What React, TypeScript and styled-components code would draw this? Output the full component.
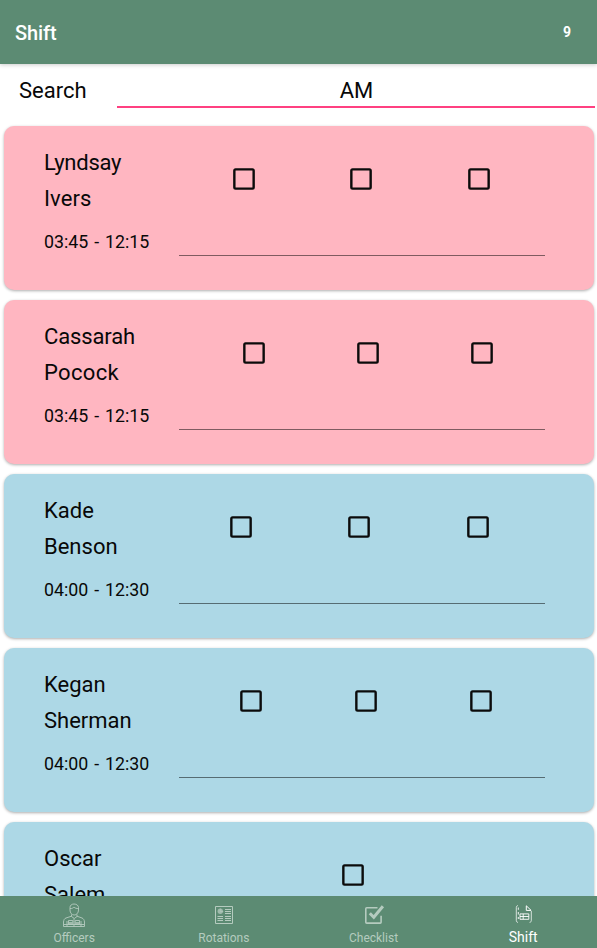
import React from 'react';
import styled, { createGlobalStyle } from 'styled-components';

const GlobalStyle = createGlobalStyle`
  * { box-sizing: border-box; }
  body { margin: 0; background: #fff; overflow: hidden; }
  h1, p { margin: 0; font-weight: 400; }
`;

const Screen = styled.div`
  display: flex;
  flex-direction: column;
  width: 100%;
  height: 948px;
  overflow: hidden;
  background: #fff;
  color: #080808;
  font-family: Roboto, sans-serif;
`;

const Toolbar = styled.header`
  display: flex;
  flex: none;
  align-items: center;
  justify-content: space-between;
  height: 64px;
  padding: 2px 26px 0 15px;
  background: #5c8b73;
  color: #fff;
  box-shadow: 0 1px 4px rgba(0, 0, 0, 0.2);
`;

const Title = styled.h1`
  font-size: 20px;
  font-weight: 500;
  line-height: 24px;
  letter-spacing: -0.1px;
`;

const Count = styled.span`
  font-size: 14px;
  font-weight: 700;
  line-height: 20px;
  padding-bottom: 2px;
`;

const SearchRow = styled.div`
  display: flex;
  flex: none;
  height: 44px;
  padding: 0 2px 0 19px;
`;

const SearchLabel = styled.label`
  width: 98px;
  padding-top: 9px;
  font-size: 22px;
  line-height: 36px;
`;

const SearchInput = styled.input`
  flex: 1;
  min-width: 0;
  padding: 12px 0 0 1px;
  border: 0;
  border-bottom: 2px solid #ff4081;
  outline: 0;
  background: transparent;
  color: inherit;
  font: 22px/30px Roboto, sans-serif;
  text-align: center;
`;

const List = styled.main`
  display: flex;
  flex: 1;
  flex-direction: column;
  gap: 10px;
  min-height: 0;
  padding: 18px 3px 0 4px;
  overflow: hidden;
`;

const Card = styled.article<{ $color: string }>`
  flex: none;
  height: 164px;
  padding: 18px 49px 0 40px;
  border-radius: 10px;
  background: ${(p) => p.$color};
  box-shadow: 0 1px 3px rgba(0, 0, 0, 0.32);
`;

const CardTop = styled.div`
  display: flex;
  height: 74px;
`;

const Name = styled.p<{ $width: number }>`
  flex: none;
  width: ${(p) => p.$width}px;
  padding-top: 1px;
  font-size: 22px;
  line-height: 36px;
`;

const NamePart = styled.span<{ $tracking?: number }>`
  display: block;
  letter-spacing: ${(p) => p.$tracking ?? 0}px;
`;

const Checks = styled.div<{ $width: number }>`
  display: flex;
  flex: none;
  width: ${(p) => p.$width}px;
  height: 70px;
  align-items: center;
`;

const CheckCell = styled.div`
  display: flex;
  flex: 1;
  justify-content: center;
`;

const Check = styled.button`
  width: 22px;
  height: 22px;
  padding: 0;
  border: 0;
  background: transparent;
  color: #0b0b0b;

  svg { display: block; }
`;

const CardBottom = styled.div`
  display: flex;
  height: 38px;
`;

const Time = styled.p`
  width: 135px;
  padding-top: 6px;
  font-size: 17.8px;
  line-height: 36px;
  word-spacing: 1.5px;
`;

const Note = styled.input`
  flex: 1;
  min-width: 0;
  height: 38px;
  padding: 0;
  border: 0;
  border-bottom: 1px solid rgba(0, 0, 0, 0.5);
  outline: 0;
  background: transparent;
`;

const TabBar = styled.nav`
  display: grid;
  flex: none;
  grid-template-columns: repeat(4, 149.7px);
  height: 52px;
  background: #5c8b73;
`;

const Tab = styled.button<{ $active?: boolean }>`
  display: flex;
  flex-direction: column;
  align-items: center;
  padding: 7px 1.4px 0 0;
  border: 0;
  background: transparent;
  color: ${(p) => (p.$active ? '#fff' : '#b5cbbf')};
  font: ${(p) => (p.$active ? '14px' : '12px')}/18px Roboto, sans-serif;

  svg { display: block; width: 24px; height: 24px; margin-bottom: ${(p) => (p.$active ? '1px' : '2px')}; }
`;

const OfficerIcon = () => (
  <svg viewBox="0 0 24 24" fill="none" stroke="currentColor" strokeWidth="0.9">
    <path d="M8 6V4.5C8 2.5 9.5 1 12 1s4.5 1.5 4.5 3.5V7c0 3-2 5-4.3 5S8 10 8 7zM8 5.5c2 .4 3-.6 4-1.5 1 1.3 2.6 1.6 4.5 1.5" />
    <path d="M9.5 11.5v2l2.8 2 2.7-2v-2M9.5 13.2 4 15c-1.7.6-2.3 2-2.5 4v4.5h21V19c-.2-2-1-3.4-2.5-4l-5-1.8" />
    <path d="M6.5 17.5h4.3v4H6.5zM13.2 17.5h4.3v4h-4.3zM12 15.5v8M5 18v5.5M19 18v5.5M2 21.5h20" />
    <path d="M7 20h3.5M13.5 20H17" strokeWidth="1.6" />
  </svg>
);

const RotationIcon = () => (
  <svg viewBox="0 0 24 24" fill="none" stroke="currentColor">
    <path d="M3.5 3.5h17v17h-17z" />
    <path d="M5.5 13.5h5.5M5.5 15.5h5.5M5.5 17.5h5.5M13 6.5h6M13 8.5h6M13 10.5h6M13 13.5h6M13 15.5h6M13 17.5h6" />
    <circle cx="8.3" cy="8.3" r="2.7" fill="currentColor" stroke="none" opacity="0.75" />
    <path d="M8.3 5.5v3h3" strokeWidth="0.6" />
  </svg>
);

const ChecklistIcon = () => (
  <svg viewBox="0 0 24 24" fill="none" stroke="currentColor">
    <path d="M15.5 4.8H4.7q-.9 0-.9.9v13.5q0 .9.9.9h13.5q.9 0 .9-.9v-6.5" strokeWidth="1.6" />
    <path d="m7.8 10.2 4 4.1 9.1-11" strokeWidth="3" />
  </svg>
);

const ShiftIcon = () => (
  <svg viewBox="0 0 24 24" fill="none" stroke="currentColor" strokeWidth="0.75">
    <path d="M7 2.6c-1.2.2-1.7.8-1.7 2v12.8c0 1.2.5 1.8 1.7 2M20.3 8v9.4c0 1.2-.5 1.8-1.7 2" />
    <path d="M15.3 2.8v4.6h4.8z" strokeWidth="1" />
    <path d="M7.3 4.5v2.3M7.3 9v2.5M7.3 14v2" strokeWidth="0.9" />
    <path d="M9 10.9h8.8v5.4H9zM9 13.5h8.8M12.2 10.9v5.4" strokeWidth="0.9" />
  </svg>
);

const EmptyBox = () => (
  <svg width="22" height="22" viewBox="0 0 22 22" fill="none" stroke="currentColor">
    <rect x="1.35" y="1.35" width="19.3" height="19.3" rx="1.3" strokeWidth="2.4" />
  </svg>
);

const PINK = '#ffb6c1';
const BLUE = '#add8e6';

type Shift = {
  first: string;
  last: string;
  firstTracking?: number;
  lastTracking?: number;
  time: string;
  color: string;
  nameWidth: number;
  checksWidth: number;
  checks: number;
};

const shifts: Shift[] = [
  { first: 'Lyndsay', last: 'Ivers', firstTracking: -0.25, lastTracking: 0.1, time: '03:45 - 12:15', color: PINK, nameWidth: 141, checksWidth: 352.4, checks: 3 },
  { first: 'Cassarah', last: 'Pocock', firstTracking: -0.12, lastTracking: 0.35, time: '03:45 - 12:15', color: PINK, nameWidth: 153, checksWidth: 342, checks: 3 },
  { first: 'Kade', last: 'Benson', time: '04:00 - 12:30', color: BLUE, nameWidth: 138, checksWidth: 355, checks: 3 },
  { first: 'Kegan', last: 'Sherman', time: '04:00 - 12:30', color: BLUE, nameWidth: 149, checksWidth: 346, checks: 3 },
  { first: 'Oscar', last: 'Salem', time: '04:00 - 12:30', color: BLUE, nameWidth: 127, checksWidth: 364, checks: 1 },
];

const ShiftCard = ({ shift }: { shift: Shift }) => (
  <Card $color={shift.color}>
    <CardTop>
      <Name $width={shift.nameWidth}>
        <NamePart $tracking={shift.firstTracking}>{shift.first}</NamePart>
        <NamePart $tracking={shift.lastTracking}>{shift.last}</NamePart>
      </Name>
      <Checks $width={shift.checksWidth}>
        {Array.from({ length: shift.checks }, (_, i) => (
          <CheckCell key={i}>
            <Check role="checkbox" aria-checked={false}>
              <EmptyBox />
            </Check>
          </CheckCell>
        ))}
      </Checks>
    </CardTop>
    <CardBottom>
      <Time>{shift.time}</Time>
      <Note />
    </CardBottom>
  </Card>
);

export default function App() {
  return (
    <Screen>
      <GlobalStyle />
      <Toolbar>
        <Title>Shift</Title>
        <Count>9</Count>
      </Toolbar>
      <SearchRow>
        <SearchLabel htmlFor="search">Search</SearchLabel>
        <SearchInput id="search" defaultValue="AM" />
      </SearchRow>
      <List>
        {shifts.map((s) => (
          <ShiftCard key={s.first} shift={s} />
        ))}
      </List>
      <TabBar>
        <Tab><OfficerIcon />Officers</Tab>
        <Tab><RotationIcon />Rotations</Tab>
        <Tab><ChecklistIcon />Checklist</Tab>
        <Tab $active><ShiftIcon />Shift</Tab>
      </TabBar>
    </Screen>
  );
}
